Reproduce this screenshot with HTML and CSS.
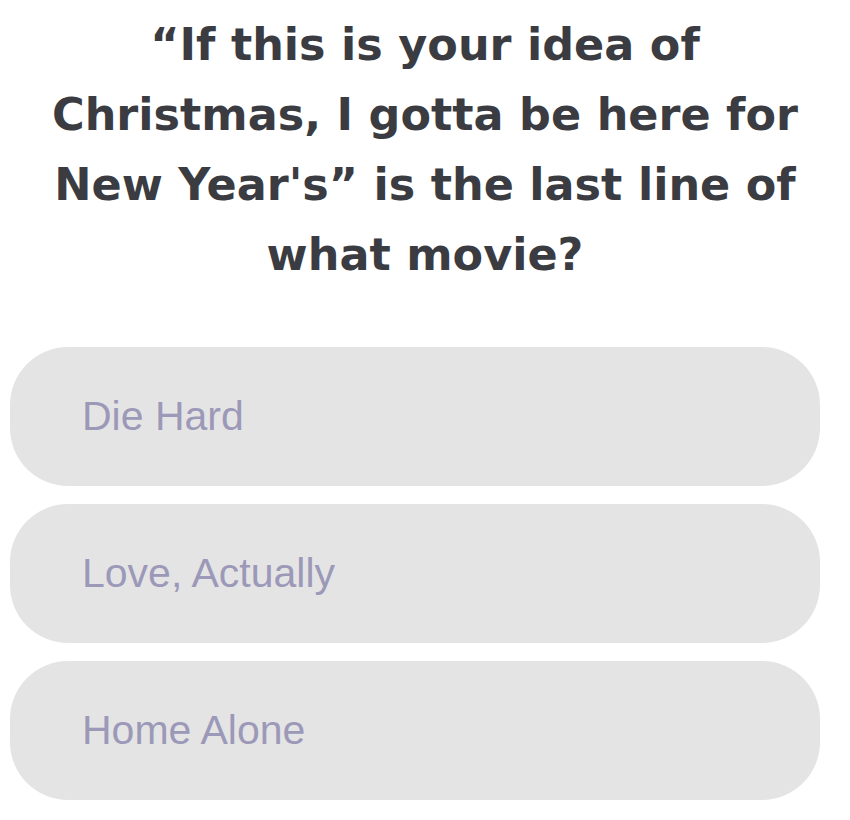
FILE: index.html
```html
<!DOCTYPE html>
<html>
<head>
<meta charset="utf-8">
<link rel="stylesheet" href="styles.css">
</head>
<body>
<main class="quiz">
  <h1 class="question">“If this is your idea of<br>Christmas, I gotta be here for<br>New Year's” is the last line of<br>what movie?</h1>
  <div class="options">
    <button class="option">Die Hard</button>
    <button class="option">Love, Actually</button>
    <button class="option">Home Alone</button>
  </div>
</main>
</body>
</html>
```
FILE: styles.css
```css
html, body {
  margin: 0;
  padding: 0;
  background: #ffffff;
}
.quiz {
  width: 850px;
  display: flex;
  flex-direction: column;
}
.question {
  margin: 0;
  padding-top: 10px;
  font-family: "DejaVu Sans", "Liberation Sans", sans-serif;
  font-weight: 700;
  font-size: 44.5px;
  line-height: 70px;
  color: #3b3c42;
  text-align: center;
}
.options {
  margin-top: 57px;
  padding: 0 30px 0 10px;
  display: flex;
  flex-direction: column;
  gap: 18px;
}
.option {
  height: 139px;
  border: none;
  border-radius: 58px;
  background: #e4e4e5;
  text-align: left;
  padding: 0 0 0 72px;
  font-family: "Liberation Sans", Arial, sans-serif;
  font-weight: 400;
  font-size: 41px;
  color: #9c99b8;
}
```
